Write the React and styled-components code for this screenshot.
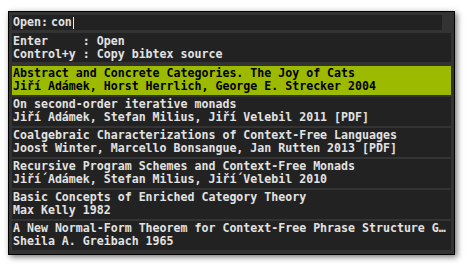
import React from "react";
import styled, { createGlobalStyle } from "styled-components";

const Global = createGlobalStyle`
  html, body { margin: 0; padding: 0; background: #ffffff; }
  body { width: 468px; height: 268px; overflow: hidden; }
`;

const Page = styled.div`
  padding: 11px 0 0 8px;
`;

const Frame = styled.div`
  background: #333333;
  border: 1px solid #000000;
  box-shadow: 2px 2px 6px rgba(0, 0, 0, 0.55);
  padding: 3px 3px 0 3px;
  display: flex;
  flex-direction: column;
  gap: 3px;
  font-family: "DejaVu Sans Mono", "Liberation Mono", monospace;
  font-weight: bold;
  font-size: 11.6px;
  line-height: 13px;
  color: #e2e2e2;
  box-sizing: border-box;
  width: 447px;
  height: 244px;
`;

const InputBar = styled.div`
  display: flex;
  align-items: center;
  gap: 3px;
  height: 15px;
  margin-right: 9px;
  background: #222222;
  padding-left: 1px;
`;

const Prompt = styled.span`
  white-space: pre;
`;

const Cursor = styled.span`
  display: inline-block;
  width: 1px;
  height: 12px;
  margin-left: -2px;
  background: #e8e8e8;
`;

const Help = styled.div`
  background: #222222;
  padding: 2px 0 1px 1px;
  white-space: pre;
`;

const List = styled.div`
  display: flex;
  flex-direction: column;
  gap: 2px;
  margin-top: 1px;
`;

const Item = styled.div`
  background: ${(p) => (p.$selected ? "#9cba00" : "#222222")};
  color: ${(p) => (p.$selected ? "#000000" : "#e2e2e2")};
  padding: 1px 0 2px 1px;
  height: 29px;
  box-sizing: border-box;
  white-space: pre;
  overflow: hidden;
`;

const Line = styled.div``;

const items = [
  ["Abstract and Concrete Categories. The Joy of Cats", "Jiří Adámek, Horst Herrlich, George E. Strecker 2004"],
  ["On second-order iterative monads", "Jiří Adámek, Stefan Milius, Jiří Velebil 2011 [PDF]"],
  ["Coalgebraic Characterizations of Context-Free Languages", "Joost Winter, Marcello Bonsangue, Jan Rutten 2013 [PDF]"],
  ["Recursive Program Schemes and Context-Free Monads", "Jiří´Adámek, Stefan Milius, Jiří´Velebil 2010"],
  ["Basic Concepts of Enriched Category Theory", "Max Kelly 1982"],
  ["A New Normal-Form Theorem for Context-Free Phrase Structure G…", "Sheila A. Greibach 1965"],
];

export default function App() {
  return (
    <Page>
      <Global />
      <Frame>
        <InputBar>
          <Prompt>Open:</Prompt>
          <span>con</span>
          <Cursor />
        </InputBar>
        <Help>
          <Line>{"Enter     : Open"}</Line>
          <Line>{"Control+y : Copy bibtex source"}</Line>
        </Help>
        <List>
          {items.map(([t, a], i) => (
            <Item key={i} $selected={i === 0}>
              <Line>{t}</Line>
              <Line>{a}</Line>
            </Item>
          ))}
        </List>
      </Frame>
    </Page>
  );
}
